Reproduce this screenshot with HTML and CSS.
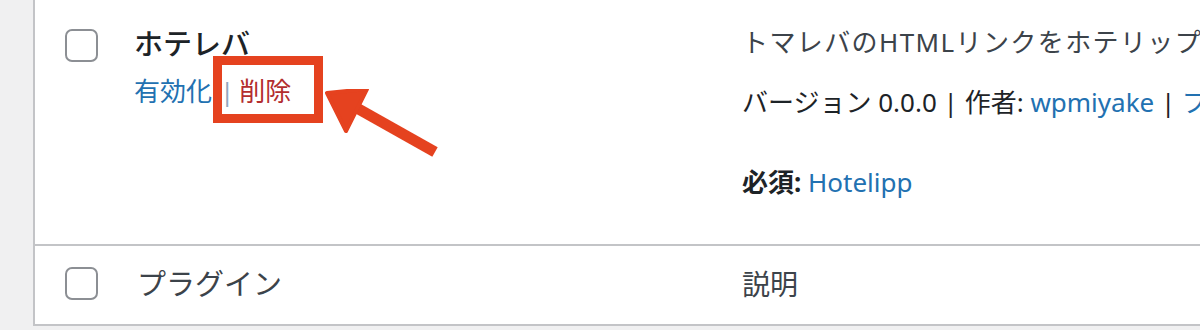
FILE: index.html
```html
<!DOCTYPE html>
<html lang="ja">
<head>
    <meta charset="UTF-8">
    <meta name="viewport" content="width=device-width, initial-scale=1.0">
    <title>プラグイン</title>
    <link rel="stylesheet" href="styles.css">
</head>
<body>
    <div class="page">
        <div class="plugin-table">
            <div class="plugin-row">
                <div class="check-col">
                    <span class="checkbox"></span>
                </div>
                <div class="title-col">
                    <strong class="plugin-name">ホテレバ</strong>
                    <div class="row-actions">
                        <a href="#" class="activate">有効化</a><span class="sep">|</span><a href="#" class="delete">削除</a>
                    </div>
                </div>
                <div class="desc-col">
                    <p class="desc">トマレバのHTMLリンクをホテリップのリンクに変換します。</p>
                    <p class="meta">バージョン 0.0.0 | 作者: <a href="#">wpmiyake</a> | <a href="#">プラグインのサイトを表示</a></p>
                    <div class="requires"><b>必須:</b> <a href="#">Hotelipp</a></div>
                </div>
            </div>
            <div class="plugin-row foot">
                <div class="check-col">
                    <span class="checkbox"></span>
                </div>
                <div class="title-col">プラグイン</div>
                <div class="desc-col">説明</div>
            </div>
        </div>

        <!-- annotation -->
        <div class="mark-box"></div>
        <svg class="mark-arrow" width="140" height="90" viewBox="0 0 140 90">
            <line x1="30" y1="18" x2="110" y2="63" stroke="#e5421f" stroke-width="11"/>
            <polygon points="2,4 42,0 21,42" fill="#e5421f" stroke="#e5421f" stroke-width="4" stroke-linejoin="round"/>
        </svg>
    </div>
</body>
</html>
```

FILE: styles.css
```css
:root {
    --bg: #f0f0f1;
    --border: #c3c4c7;
    --text: #3c434a;
    --text-dark: #1d2327;
    --link: #2271b1;
    --delete: #b32d2e;
    --mark: #e5421f;
}

* {
    margin: 0;
    padding: 0;
    box-sizing: border-box;
}

body {
    font-family: "Noto Sans", "Noto Sans CJK JP", sans-serif;
    background-color: var(--bg);
    color: var(--text);
    width: 1200px;
    height: 330px;
    overflow: hidden;
}

a {
    color: var(--link);
    text-decoration: none;
}

.page {
    position: relative;
    height: 330px;
}

.plugin-table {
    margin-left: 33px;
    width: 1200px;
    background-color: #fff;
    border-left: 2px solid var(--border);
    border-bottom: 2px solid var(--border);
}

.plugin-row {
    display: flex;
    height: 246px;
    border-bottom: 2px solid var(--border);
    padding-top: 29px;
}

.plugin-row.foot {
    height: 78px;
    border-bottom: none;
    padding-top: 21px;
    align-items: flex-start;
}

.check-col {
    width: 99px;
    padding-left: 30px;
    flex-shrink: 0;
}

.checkbox {
    display: block;
    width: 33px;
    height: 33px;
    border: 2px solid #8c8f94;
    border-radius: 7px;
    background-color: #fff;
}

.title-col {
    width: 608px;
    flex-shrink: 0;
    font-size: 28px;
    color: var(--text);
}

.foot .title-col {
    padding-left: 3px;
    font-size: 29px;
    line-height: 34px;
}

.foot .desc-col {
    font-size: 28px;
    line-height: 34px;
    margin-top: 0;
    overflow: visible;
}

.plugin-name {
    display: block;
    font-size: 29px;
    font-weight: 500;
    color: var(--text-dark);
    line-height: 30px;
}

.row-actions {
    margin-top: 15px;
    font-size: 26px;
    line-height: 34px;
}

.row-actions .sep {
    color: #93a7bd;
    margin: 0 5px 0 8px;
}

.row-actions .delete {
    color: var(--delete);
}

.desc-col {
    flex: 1;
    white-space: nowrap;
    overflow: hidden;
    font-size: 26px;
    margin-top: -5px;
}

.desc {
    letter-spacing: 1.4px;
    line-height: 36px;
    margin-bottom: 24px;
}

.meta {
    line-height: 36px;
    color: var(--text-dark);
}

.requires {
    margin-top: 44px;
    line-height: 36px;
    color: var(--text-dark);
}

.mark-box {
    position: absolute;
    left: 213px;
    top: 56px;
    width: 110px;
    height: 67px;
    border: 9px solid var(--mark);
}

.mark-arrow {
    position: absolute;
    left: 325px;
    top: 89px;
}
```
